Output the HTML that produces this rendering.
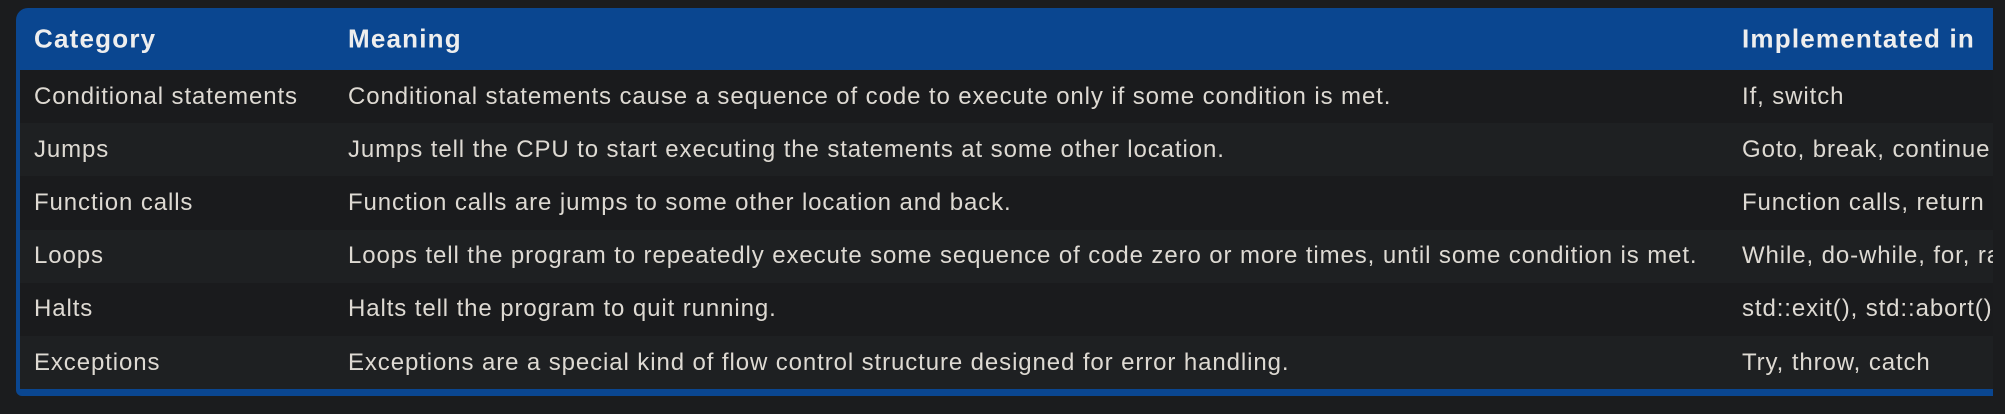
<!DOCTYPE html>
<html><head><style>
html,body{margin:0;padding:0;background:#1b1c1e;width:2005px;height:414px;overflow:hidden}
.wrap{position:absolute;left:16px;top:8px;width:1977px;height:388px;background:#0a4690;border-radius:12px 0 0 6px;overflow:hidden}
.inner{position:absolute;left:4px;top:62px;right:0;height:319px}
.row{position:absolute;left:0;right:0;height:53.2px;font:24px "Liberation Sans",sans-serif;letter-spacing:0.9px;color:#dedad3}
.row span{position:absolute;top:50%;transform:translateY(-50%);white-space:nowrap}
.hd{font-weight:bold;color:#eeeeee;font-size:26px;letter-spacing:1.2px}
.a{left:14px}.b{left:328px}.c{left:1722px}
</style></head><body>
<div class="wrap">
<div class="row hd" style="top:0;height:62px;left:4px"><span class="a">Category</span><span class="b">Meaning</span><span class="c">Implementated in</span></div>
<div class="inner">
<div class="row" style="top:0;background:#1a1b1d"><span class="a">Conditional statements</span><span class="b">Conditional statements cause a sequence of code to execute only if some condition is met.</span><span class="c">If, switch</span></div>
<div class="row" style="top:53.2px;background:#1e2022"><span class="a">Jumps</span><span class="b">Jumps tell the CPU to start executing the statements at some other location.</span><span class="c">Goto, break, continue</span></div>
<div class="row" style="top:106.4px;background:#1a1b1d"><span class="a">Function calls</span><span class="b">Function calls are jumps to some other location and back.</span><span class="c">Function calls, return</span></div>
<div class="row" style="top:159.6px;background:#1e2022"><span class="a">Loops</span><span class="b">Loops tell the program to repeatedly execute some sequence of code zero or more times, until some condition is met.</span><span class="c">While, do-while, for, ranged-for</span></div>
<div class="row" style="top:212.8px;background:#1a1b1d"><span class="a">Halts</span><span class="b">Halts tell the program to quit running.</span><span class="c">std::exit(), std::abort()</span></div>
<div class="row" style="top:266px;background:#1e2022"><span class="a">Exceptions</span><span class="b">Exceptions are a special kind of flow control structure designed for error handling.</span><span class="c">Try, throw, catch</span></div>
</div>
</div>
</body></html>
